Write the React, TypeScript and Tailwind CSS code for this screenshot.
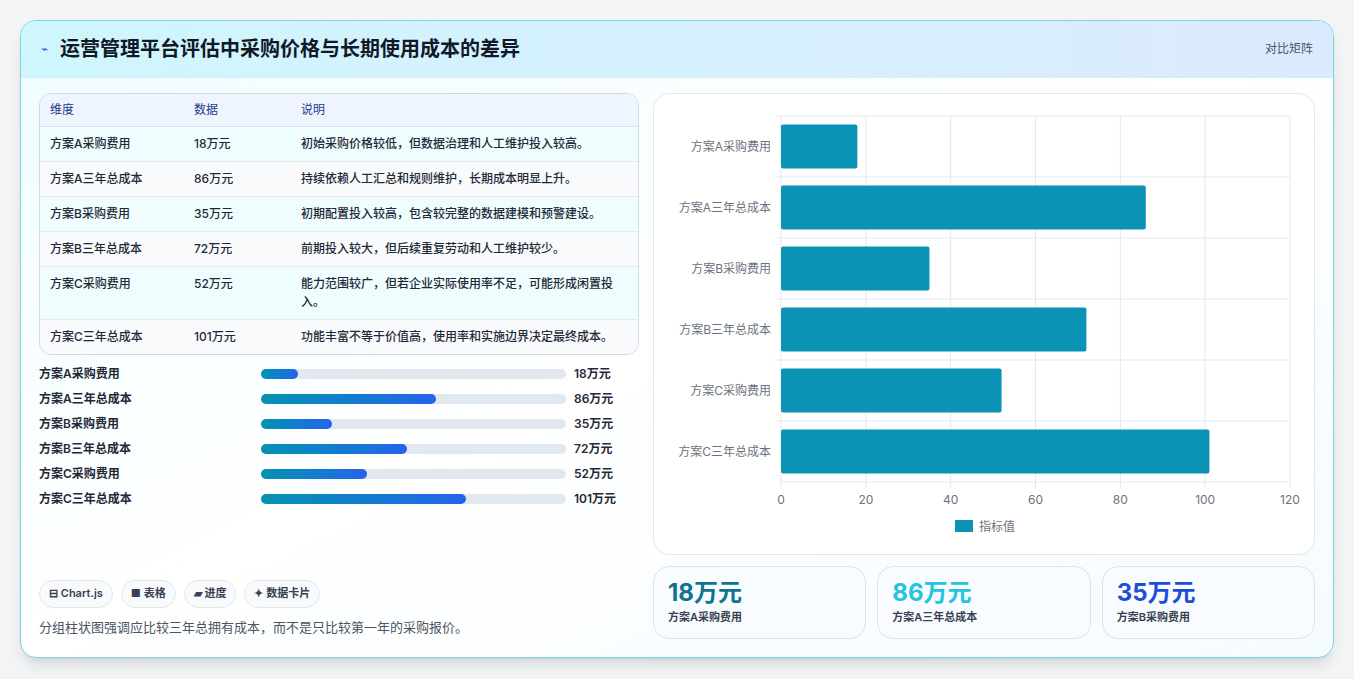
import React from 'react';

const rows = [
  { name: '方案A采购费用', v: 18, note: '初始采购价格较低，但数据治理和人工维护投入较高。' },
  { name: '方案A三年总成本', v: 86, note: '持续依赖人工汇总和规则维护，长期成本明显上升。' },
  { name: '方案B采购费用', v: 35, note: '初期配置投入较高，包含较完整的数据建模和预警建设。' },
  { name: '方案B三年总成本', v: 72, note: '前期投入较大，但后续重复劳动和人工维护较少。' },
  { name: '方案C采购费用', v: 52, note: '能力范围较广，但若企业实际使用率不足，可能形成闲置投入。' },
  { name: '方案C三年总成本', v: 101, note: '功能丰富不等于价值高，使用率和实施边界决定最终成本。' },
];

const font = { fontFamily: 'Inter, "Noto Sans CJK SC", sans-serif' };

function Chart() {
  const L = 127, T = 22, W = 509, H = 366;
  const band = H / 6;
  return (
    <svg width="662" height="462" className="block">
      {[0, 20, 40, 60, 80, 100, 120].map((t) => {
        const x = L + (t / 120) * W;
        return (
          <g key={t}>
            <line x1={x} y1={T} x2={x} y2={T + H + 6} stroke="#e5e7eb" />
            <text x={x} y={T + H + 22} textAnchor="middle" fontSize="12" fill="#6b7280">{t}</text>
          </g>
        );
      })}
      {rows.map((r, i) => {
        const y = T + i * band;
        return (
          <g key={r.name}>
            <line x1={L - 6} y1={y} x2={L + W} y2={y} stroke="#e5e7eb" />
            <rect x={L} y={y + 8.5} width={(r.v / 120) * W} height={band - 17} rx="2" fill="#0a93b4" />
            <text x={L - 10} y={y + band / 2 + 4} textAnchor="end" fontSize="12" fill="#6b7280">{r.name}</text>
          </g>
        );
      })}
      <line x1={L} y1={T + H} x2={L + W} y2={T + H} stroke="#e5e7eb" />
      <rect x="301" y="426" width="18" height="12" fill="#0a93b4" />
      <text x="325" y="437" fontSize="12" fill="#6b7280">指标值</text>
    </svg>
  );
}

export default function App() {
  return (
    <div className="w-[1354px] h-[679px] bg-[#f3f4f6] pt-5 px-5" style={font}>
      <div className="h-[638px] w-[1314px] rounded-2xl border border-[#7dd3e0] bg-gradient-to-br from-[#effcff] via-white to-[#f5fbff] overflow-hidden shadow-lg flex flex-col">
        <div className="h-[57px] shrink-0 flex items-center justify-between px-5 bg-gradient-to-r from-[#cff6fd] to-[#dbeafe] border-b border-[#cdeff5]">
          <div className="flex items-center gap-3">
            <span className="text-[#2563eb] text-xs">⌁</span>
            <h1 className="text-[20px] font-bold text-[#111827]">运营管理平台评估中采购价格与长期使用成本的差异</h1>
          </div>
          <span className="text-xs text-[#4b5563]">对比矩阵</span>
        </div>
        <div className="flex gap-[14px] px-[18px] pt-[15px] flex-1">
          <div className="w-[600px] flex flex-col">
            <div className="rounded-xl border border-[#d1d9e6] overflow-hidden text-xs">
              <div className="flex h-[33px] items-center bg-[#eef5fe] text-[#1e3a8a] border-b border-[#d7e2ee]">
                <div className="w-[154px] pl-[10px]">维度</div>
                <div className="w-[107px]">数据</div>
                <div className="flex-1">说明</div>
              </div>
              {rows.map((r, i) => (
                <div key={r.name} className={`flex py-[8px] text-[#1f2937] font-medium leading-[18px] ${i % 2 ? 'bg-[#f8fafc]' : 'bg-[#f0fdff]'} ${i < 5 ? 'border-b border-[#e5eaf0]' : ''}`}>
                  <div className="w-[154px] pl-[10px]">{r.name}</div>
                  <div className="w-[107px]">{r.v}万元</div>
                  <div className="flex-1 pr-4">{r.note}</div>
                </div>
              ))}
            </div>
            <div className="mt-[11px] flex flex-col gap-[9px]">
              {rows.map((r) => (
                <div key={r.name} className="flex items-center h-4 text-xs font-semibold text-[#1f2937]">
                  <div className="w-[222px]">{r.name}</div>
                  <div className="w-[305px] h-[10px] rounded-full bg-[#e2e8f0]">
                    <div className="h-full rounded-full bg-gradient-to-r from-[#0891b2] to-[#2563eb]" style={{ width: `${(r.v / 150) * 100}%` }} />
                  </div>
                  <div className="ml-2">{r.v}万元</div>
                </div>
              ))}
            </div>
            <div className="mt-auto pb-[20px]">
              <div className="flex gap-2 text-[11px] font-semibold text-[#374151]">
                {['⊟ Chart.js', '■ 表格', '▰ 进度', '✦ 数据卡片'].map((t) => (
                  <span key={t} className="px-[9px] h-[28px] flex items-center rounded-full border border-[#e5e7eb] bg-[#f8fafc]">{t}</span>
                ))}
              </div>
              <p className="mt-[10px] text-[13px] text-[#4b5563]">分组柱状图强调应比较三年总拥有成本，而不是只比较第一年的采购报价。</p>
            </div>
          </div>
          <div className="w-[662px] flex flex-col">
            <div className="h-[462px] rounded-2xl border border-[#e5e7eb] bg-white overflow-hidden">
              <Chart />
            </div>
            <div className="mt-[11px] flex gap-[11px]">
              {[
                { v: 18, n: '方案A采购费用', c: 'text-[#0e7490]' },
                { v: 86, n: '方案A三年总成本', c: 'text-[#22c4e0]' },
                { v: 35, n: '方案B采购费用', c: 'text-[#1d4ed8]' },
              ].map((c) => (
                <div key={c.n} className="flex-1 h-[73px] rounded-2xl border border-[#dbe4ee] bg-[#f8fbff] px-[14px] pt-[10px]">
                  <div className={`text-[24px] leading-8 font-bold ${c.c}`}>{c.v}万元</div>
                  <div className="text-[11px] font-semibold text-[#374151]">{c.n}</div>
                </div>
              ))}
            </div>
          </div>
        </div>
      </div>
    </div>
  );
}
